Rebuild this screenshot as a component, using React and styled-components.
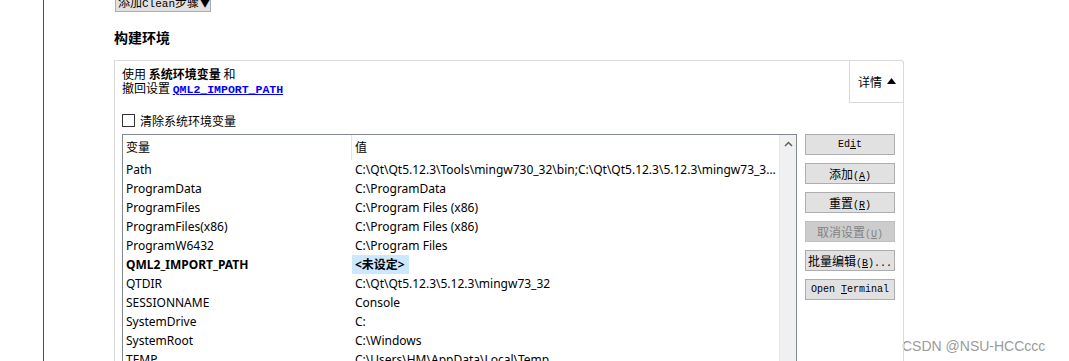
import React from 'react'
import styled, { createGlobalStyle } from 'styled-components'

const Global = createGlobalStyle`
  html, body { margin: 0; padding: 0; background: #fff; overflow: hidden; }
  body { font-family: "Noto Sans CJK SC", sans-serif; font-size: 12px; color: #000; }
`

const Page = styled.div`
  display: flex;
  height: 361px;
  overflow: hidden;
`

const Gutter = styled.div`
  width: 43px;
  border-right: 1px solid #505050;
  flex: none;
`

const Content = styled.div`
  flex: none;
  width: 790px;
  padding-left: 70px;
  display: flex;
  flex-direction: column;
  & > * { flex: none; }
`

const AddStep = styled.div`
  width: 96px;
  height: 22px;
  margin-top: -10px;
  margin-left: 1px;
  box-sizing: border-box;
  border: 1px solid #adadad;
  background: #e1e1e1;
  padding: 3px 0 0 2px;
  font-size: 12px;
  line-height: 16px;
  white-space: nowrap;
  overflow: hidden;
`

const Heading = styled.div`
  margin-top: 17px;
  height: 16px;
  font-size: 14px;
  font-weight: bold;
  line-height: 16px;
`

const Panel = styled.div`
  margin-top: 15px;
  height: 302px;
  box-sizing: border-box;
  border: 1px solid #d9d9d9;
  border-bottom: none;
  border-top-right-radius: 3px;
  display: flex;
  flex-direction: column;
  padding: 0 0 0 7px;
  position: relative;
`

const DetailsTab = styled.div`
  position: absolute;
  top: -1px;
  right: -1px;
  width: 55px;
  height: 43px;
  box-sizing: border-box;
  border-left: 1px solid #d9d9d9;
  border-bottom: 1px solid #d9d9d9;
  display: flex;
  align-items: center;
  padding-left: 8px;
  gap: 5px;
  font-size: 12px;
`

const Info = styled.div`
  padding-top: 6px;
  line-height: 14px;
  font-size: 12px;
`

const Strong = styled.b`
  font-weight: bold;
`

const Link = styled.a`
  color: #0000ff;
  font-family: "Liberation Mono", monospace;
  font-weight: bold;
  font-size: 11.5px;
  text-decoration: underline;
`

const CheckRow = styled.label`
  margin-top: 16px;
  display: flex;
  align-items: center;
  gap: 5px;
  height: 14px;
  font-size: 12px;
`

const Box = styled.span`
  width: 11px;
  height: 11px;
  border: 1px solid #333;
  background: #fff;
  display: inline-block;
`

const Body = styled.div`
  margin-top: 7px;
  display: flex;
  gap: 8px;
  align-items: flex-start;
`

const Table = styled.div`
  width: 675px;
  height: 240px;
  box-sizing: border-box;
  border: 1px solid #828790;
  border-bottom: none;
  display: flex;
  font-family: "Noto Sans", "Noto Sans CJK SC", sans-serif;
  font-size: 12px;
  overflow: hidden;
`

const Grid = styled.div`
  flex: 1;
  min-width: 0;
`

const Row = styled.div`
  display: grid;
  grid-template-columns: 229px 1fr;
  height: ${p => (p.$head ? 25 : 19)}px;
  align-items: center;
`

const Cell = styled.div`
  padding-left: 3px;
  white-space: nowrap;
  overflow: hidden;
  text-overflow: ellipsis;
  font-weight: ${p => (p.$bold ? 'bold' : 'normal')};
  border-right: ${p => (p.$head ? '1px solid #e5e5e5' : 'none')};
  height: ${p => (p.$head ? '25px' : 'auto')};
  line-height: ${p => (p.$head ? '25px' : '19px')};
`

const Unset = styled.span`
  background: #cce8ff;
  font-weight: bold;
  margin-left: -3px;
  padding: 2px 4px 2px 3px;
`

const Scroll = styled.div`
  width: 17px;
  flex: none;
  background: #f0f0f0;
  border-left: 1px solid #e8e8e8;
  display: flex;
  justify-content: center;
  padding-top: 6px;
  box-sizing: border-box;
`

const Buttons = styled.div`
  display: flex;
  flex-direction: column;
  gap: 8px;
`

const Btn = styled.div`
  width: 90px;
  height: 21px;
  box-sizing: border-box;
  border: 1px solid ${p => (p.$disabled ? '#bfbfbf' : '#adadad')};
  background: ${p => (p.$disabled ? '#cccccc' : '#e1e1e1')};
  color: ${p => (p.$disabled ? '#838383' : '#000')};
  text-align: center;
  font-family: "Liberation Mono", monospace;
  font-size: 10px;
  white-space: pre;
  line-height: 20px;
  overflow: hidden;
`

const Han = styled.span`
  font-family: "Noto Sans CJK SC", sans-serif;
  font-size: 12px;
`

const Mono = styled.span`
  font-family: "Liberation Mono", monospace;
  font-size: ${p => p.$size || 10}px;
  text-decoration: ${p => (p.$u ? 'underline' : 'none')};
`

const Watermark = styled.div`
  flex: 1;
  display: flex;
  align-items: flex-end;
  padding: 0 0 7px 0;
  margin-left: -2px;
  font-family: "Liberation Sans", Arial, sans-serif;
  font-size: 14px;
  color: #9a9a9a;
  white-space: nowrap;
`

// split a label into CJK runs and latin runs, underline the char after &
function Label({ text }) {
  const parts = []
  let buf = ''
  let cjk = null
  let key = 0
  const flush = () => {
    if (!buf) return
    parts.push(cjk ? <Han key={key++}>{buf}</Han> : <Mono key={key++}>{buf}</Mono>)
    buf = ''
  }
  for (let i = 0; i < text.length; i++) {
    const ch = text[i]
    if (ch === '&') {
      flush()
      parts.push(<Mono key={key++} $u>{text[i + 1]}</Mono>)
      i++
      continue
    }
    const isCjk = /[\u3000-\u9fff]/.test(ch)
    if (cjk !== null && isCjk !== cjk) flush()
    cjk = isCjk
    buf += ch
  }
  flush()
  return <span>{parts}</span>
}

const rows = [
  ['Path', 'C:\\Qt\\Qt5.12.3\\Tools\\mingw730_32\\bin;C:\\Qt\\Qt5.12.3\\5.12.3\\mingw73_32\\bin;C:\\Windows\\system32'],
  ['ProgramData', 'C:\\ProgramData'],
  ['ProgramFiles', 'C:\\Program Files (x86)'],
  ['ProgramFiles(x86)', 'C:\\Program Files (x86)'],
  ['ProgramW6432', 'C:\\Program Files'],
  ['QML2_IMPORT_PATH', null],
  ['QTDIR', 'C:\\Qt\\Qt5.12.3\\5.12.3\\mingw73_32'],
  ['SESSIONNAME', 'Console'],
  ['SystemDrive', 'C:'],
  ['SystemRoot', 'C:\\Windows'],
  ['TEMP', 'C:\\Users\\HM\\AppData\\Local\\Temp'],
  ['TMP', 'C:\\Users\\HM\\AppData\\Local\\Temp'],
]

const buttons = [
  { label: 'Ed&it' },
  { label: '添加(&A)' },
  { label: '重置(&R)' },
  { label: '取消设置(&U)', disabled: true },
  { label: '批量编辑(&B)...' },
  { label: 'Open &Terminal' },
]

export default function App() {
  return (
    <Page>
      <Global />
      <Gutter />
      <Content>
        <AddStep>添加<Mono $size={11}>Clean</Mono>步骤▼</AddStep>
        <Heading>构建环境</Heading>
        <Panel>
          <DetailsTab>
            详情
            <svg width="9" height="6" viewBox="0 0 9 6"><path d="M0 6 L4.5 0 L9 6 Z" fill="#000" /></svg>
          </DetailsTab>
          <Info>
            <div>使用 <Strong>系统环境变量</Strong> 和</div>
            <div>撤回设置 <Link>QML2_IMPORT_PATH</Link></div>
          </Info>
          <CheckRow><Box />清除系统环境变量</CheckRow>
          <Body>
            <Table>
              <Grid>
                <Row $head>
                  <Cell $head>变量</Cell>
                  <Cell>值</Cell>
                </Row>
                {rows.map(([name, value]) => (
                  <Row key={name}>
                    <Cell $bold={value === null}>{name}</Cell>
                    <Cell>{value === null ? <Unset>&lt;未设定&gt;</Unset> : value}</Cell>
                  </Row>
                ))}
              </Grid>
              <Scroll>
                <svg width="9" height="6" viewBox="0 0 9 6"><path d="M1 5 L4.5 1.5 L8 5" fill="none" stroke="#606060" strokeWidth="1.5" /></svg>
              </Scroll>
            </Table>
            <Buttons>
              {buttons.map(b => (
                <Btn key={b.label} $disabled={b.disabled}><Label text={b.label} /></Btn>
              ))}
            </Buttons>
          </Body>
        </Panel>
      </Content>
      <Watermark>CSDN @NSU-HCCccc</Watermark>
    </Page>
  )
}
